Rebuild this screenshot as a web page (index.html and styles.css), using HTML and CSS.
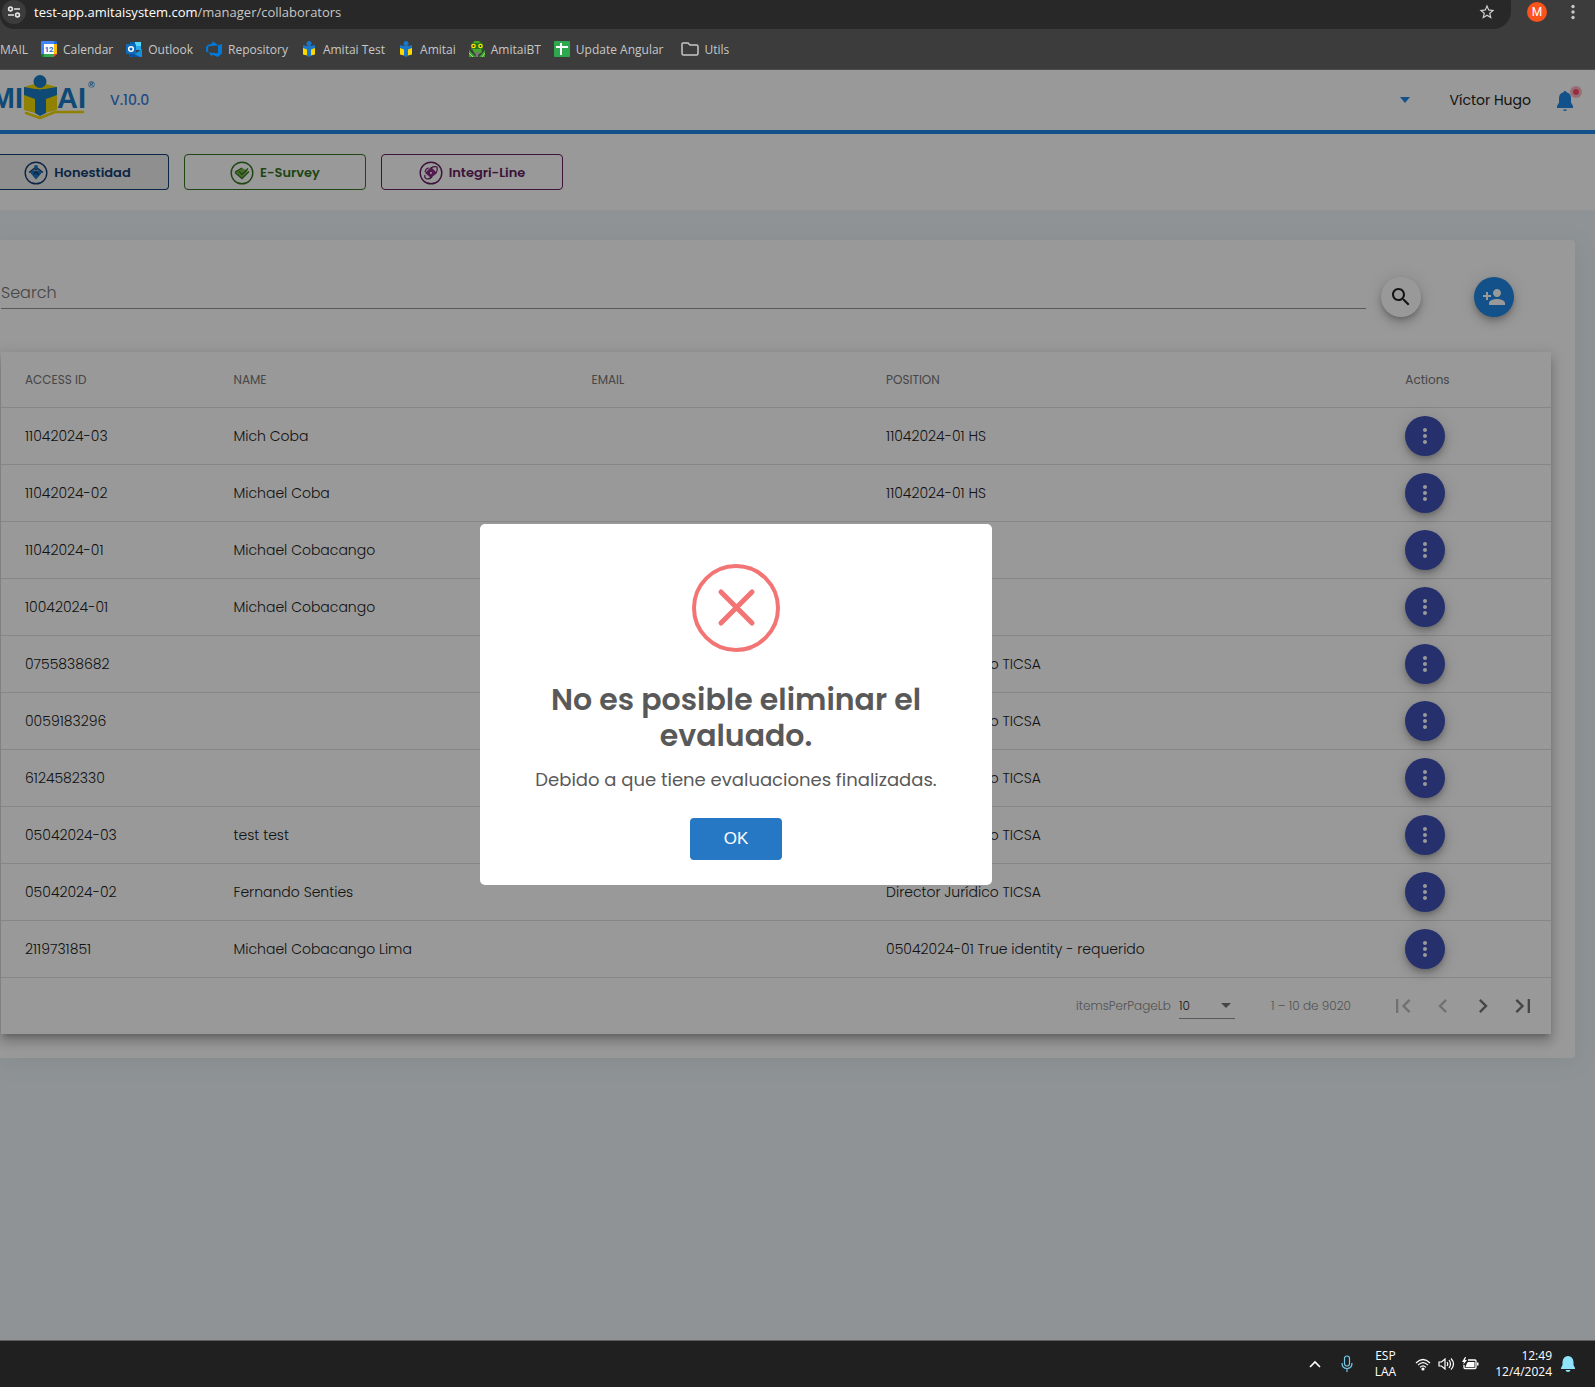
FILE: index.html
```html
<!DOCTYPE html>
<html lang="es">
<head>
    <meta charset="UTF-8">
    <meta name="viewport" content="width=device-width, initial-scale=1.0">
    <title>Amitai - Collaborators</title>
    <link rel="stylesheet" href="styles.css">
</head>
<body>
    <!-- Shared icons -->
    <svg class="sprite" aria-hidden="true">
        <symbol id="dots" viewBox="0 0 24 24"><path d="M12 8c1.1 0 2-.9 2-2s-.9-2-2-2-2 .9-2 2 .9 2 2 2zm0 2c-1.1 0-2 .9-2 2s.9 2 2 2 2-.9 2-2-.9-2-2-2zm0 6c-1.1 0-2 .9-2 2s.9 2 2 2 2-.9 2-2-.9-2-2-2z"/></symbol>
        <symbol id="amitai" viewBox="0 0 16 16">
            <path fill="#fdd800" d="M2 5h12v8.500L8 15l-6-1.500z"/>
            <path fill="#1976c8" d="M2 4l4 1h4l4-1v3l-4 1.500V15l-2 1-2-1V8.500L2 7z"/>
            <circle fill="#1976c8" cx="8" cy="2.500" r="2.500"/>
        </symbol>
    </svg>

    <header class="browser">
        <div class="toolbar">
            <div class="address">
                <button class="site-info" type="button" aria-label="Site information">
                    <svg width="14" height="12" viewBox="0 0 14 12" fill="none" stroke="#e3e3e3" stroke-width="1.600"><circle cx="3.500" cy="3" r="1.900"/><path d="M7 3h6M1 9h6"/><circle cx="10.500" cy="9" r="1.900"/></svg>
                </button>
                <span class="url">test-app.amitaisystem.com<span class="path">/manager/collaborators</span></span>
                <button class="star" type="button" aria-label="Bookmark">
                    <svg width="18" height="18" viewBox="0 0 24 24" fill="#d0d0d0"><path d="M22 9.240l-7.190-.62L12 2 9.190 8.630 2 9.240l5.460 4.730L5.820 21 12 17.270 18.180 21l-1.630-7.030L22 9.240zM12 15.400l-3.760 2.270 1-4.280-3.320-2.880 4.380-.38L12 6.100l1.710 4.040 4.380.38-3.320 2.880 1 4.280L12 15.400z"/></svg>
                </button>
            </div>
            <button class="profile" type="button">M</button>
            <button class="menu" type="button" aria-label="Menu">
                <svg width="20" height="20" viewBox="0 0 20 20" fill="#c7c7c7"><circle cx="10" cy="4.500" r="1.700"/><circle cx="10" cy="10" r="1.700"/><circle cx="10" cy="15.500" r="1.700"/></svg>
            </button>
        </div>
        <nav class="bookmarks">
            <a href="#">MAIL</a>
            <a href="#">
                <svg width="16" height="16" viewBox="0 0 16 16"><path fill="#fff" d="M3 3h10v10H3z"/><path fill="#4285f4" d="M1 0h12v3H3v10H0V1z"/><path fill="#1a66d6" d="M13 0h2l1 1v2h-3z"/><path fill="#fbbc04" d="M13 3h3v10h-3z"/><path fill="#34a853" d="M3 13h10v3H3z"/><path fill="#188038" d="M0 13h3v3H1z"/><path fill="#ea4335" d="M13 13h3l-3 3z"/><text x="8" y="11" text-anchor="middle" class="day">12</text></svg>
                Calendar
            </a>
            <a href="#">
                <svg width="16" height="16" viewBox="0 0 16 16"><path fill="#50d9ff" d="M4 1h11v8H4z"/><path fill="#0a64ad" d="M4 1h5v4H4z"/><path fill="#28a8ea" d="M9 5h6v4H9z"/><path fill="#1490df" d="M3 8l7 4 6-4v8H4z"/><path fill="#0a4fa0" d="M4 11l10 5H5l-1-1z"/><rect fill="#0f6cbd" y="3" width="10" height="10" rx="1"/><circle cx="5" cy="8" r="2.300" fill="none" stroke="#fff" stroke-width="1.500"/></svg>
                Outlook
            </a>
            <a href="#">
                <svg width="16" height="16" viewBox="0 0 16 16"><path fill="#0078d7" d="M16 3v9.500L12 16l-6-2.300V16L2.500 11.500 12 12.300V4.200zM12.200 4.200L6.500 0v2.300L1.500 4 0 6v4.500l2.200 1V5.600z"/></svg>
                Repository
            </a>
            <a href="#"><svg width="16" height="16"><use href="#amitai"/></svg> Amitai Test</a>
            <a href="#"><svg width="16" height="16"><use href="#amitai"/></svg> Amitai</a>
            <a href="#">
                <svg width="16" height="16" viewBox="0 0 16 16"><path fill="#27731f" d="M2 3l3-3h6l3 3v6H2z"/><path fill="#49a52d" d="M5 0h5l1 2H5zM3 8h9l1 3-3 2H6z"/><circle fill="#ffe700" cx="4.500" cy="5" r="2.300"/><circle fill="#ffe700" cx="11.500" cy="5" r="2.300"/><circle fill="#223b12" cx="4.500" cy="5" r="1"/><circle fill="#223b12" cx="11.500" cy="5" r="1"/><path fill="#39a32f" d="M0 9l7 7H0zM16 9l-6 7h6z"/><path fill="#777" d="M6 11h4l-1 5H7z"/><path stroke="#a8d96a" d="M0 12l4 4M16 12l-3 4"/></svg>
                AmitaiBT
            </a>
            <a href="#">
                <svg width="16" height="16" viewBox="0 0 16 16"><rect fill="#2ea84f" width="16" height="16" rx="1"/><path fill="#fff" d="M2 5h4V2h2v3h6v2H8v7H6V7H2z"/></svg>
                Update Angular
            </a>
            <a class="folder" href="#">
                <svg width="18" height="14" viewBox="0 0 18 14" fill="none" stroke="#c7c7c7" stroke-width="1.500"><path d="M2 1h5l2 2h6.500q1.500 0 1.500 1.500v7q0 1.500-1.500 1.500h-13Q1 13 1 11.500V2q0-1 1-1z"/></svg>
                Utils
            </a>
        </nav>
    </header>

    <div class="page">
        <header class="topbar">
            <svg class="logo" width="98" height="60" viewBox="0 0 98 60" role="img" aria-label="Amitai">
                <path fill="#f0d800" d="M24 17l10-3h12l11 3v23l-12 3-5 2-5-2-11-3z"/>
                <path fill="none" stroke="#f0d800" stroke-width="2.500" stroke-linecap="round" stroke-linejoin="round" d="M26 43l14 5 15-6h28"/>
                <path fill="#1a7bc4" d="M24 17l11 2h10l12-2v8l-11 4v14l-6 3-5-3V29l-11-4z"/>
                <circle fill="#1a7bc4" cx="40" cy="11.500" r="6.500"/>
                <path fill="none" stroke="#f0d800" stroke-width="1.200" d="M33 17q7 4 14 0"/>
                <text class="logo-text" x="23" y="38" text-anchor="end">MI</text>
                <text class="logo-text" x="57" y="38">AI</text>
                <text class="logo-mark" x="88" y="18">®</text>
            </svg>
            <span class="version">V.10.0</span>
            <button class="caret" type="button" aria-label="Company">
                <svg width="10" height="6" viewBox="0 0 10 6" fill="#1e88e5"><path d="M0 0h10L5 6z"/></svg>
            </button>
            <span class="user">Víctor Hugo</span>
            <button class="alerts" type="button" aria-label="Notifications">
                <svg width="30" height="30" viewBox="0 0 30 30"><path fill="#1e88e5" d="M10 24.500h4q-.5 1.500-2 1.500t-2-1.500zM18 17.500V13q0-4.500-4.600-5.800Q13.400 6 12 6t-1.400 1.200Q6 8.500 6 13v4.500L4 21v2h16v-2z"/><circle fill="#fc4b6c" fill-opacity=".4" cx="23" cy="7" r="6"/><circle fill="#fc4b6c" cx="23" cy="7" r="3"/></svg>
            </button>
        </header>

        <nav class="modules">
            <button class="module honesty" type="button">
                <svg width="24" height="24" viewBox="0 0 24 24"><circle cx="12" cy="12" r="10.800" fill="none" stroke="currentColor" stroke-width="1.400"/><circle cx="12" cy="6" r="2" fill="#1b75bc"/><path fill="#1b75bc" d="M6 11.500l3-2.500 3 1 3-1 3 2.500-6 7z"/><path fill="none" stroke="currentColor" stroke-width="1.300" d="M5 11.500l5-4 2 1.500 2-1.500 5 4M10 13l2-2 3 3"/></svg>
                Honestidad
            </button>
            <button class="module survey" type="button">
                <svg width="24" height="24" viewBox="0 0 24 24"><circle cx="12" cy="12" r="10.800" fill="none" stroke="currentColor" stroke-width="1.400"/><path fill="#7ab648" d="M5 11l7-4 6 3-6 7z"/><path fill="none" stroke="currentColor" stroke-width="1.400" d="M5 11.500l7 6 7-7M9 10.500l3 3 6-6M5 11l7-4"/></svg>
                E-Survey
            </button>
            <button class="module integri" type="button">
                <svg width="24" height="24" viewBox="0 0 24 24"><circle cx="12" cy="12" r="10.800" fill="none" stroke="currentColor" stroke-width="1.400"/><path fill="#8a2b85" d="M12 6l6 6-6 5-6-5z"/><path fill="none" stroke="currentColor" stroke-width="1.200" d="M6 14q-1 3 2 4 3 0 5-2M12 7q3-2 6-1 1 3-1 6M6 11q1-4 4-4"/><circle cx="12" cy="12" r="1" fill="#fff"/></svg>
                Integri-Line
            </button>
        </nav>

        <main class="card">
            <form class="search">
                <input class="search-input" type="text" placeholder="Search" aria-label="Search">
                <button class="fab light" type="button" aria-label="Search">
                    <svg width="24" height="24" viewBox="0 0 24 24"><path d="M15.500 14h-.79l-.28-.27C15.410 12.590 16 11.110 16 9.500 16 5.910 13.090 3 9.500 3S3 5.910 3 9.500 5.910 16 9.500 16c1.610 0 3.090-.59 4.230-1.570l.27.28v.79l5 4.990L20.490 19l-4.990-5zm-6 0C7.010 14 5 11.990 5 9.500S7.010 5 9.500 5 14 7.010 14 9.500 11.990 14 9.500 14z"/></svg>
                </button>
                <button class="fab blue" type="button" aria-label="Add collaborator">
                    <svg width="24" height="24" viewBox="0 0 24 24"><path d="M15 12c2.210 0 4-1.790 4-4s-1.790-4-4-4-4 1.790-4 4 1.790 4 4 4zm-9-2V7H4v3H1v2h3v3h2v-3h3v-2H6zm9 4c-2.670 0-8 1.340-8 4v2h16v-2c0-2.660-5.330-4-8-4z"/></svg>
                </button>
            </form>

            <div class="table-box">
                <table>
                    <thead>
                        <tr>
                            <th class="col-id">ACCESS ID</th>
                            <th class="col-name">NAME</th>
                            <th class="col-email">EMAIL</th>
                            <th class="col-position">POSITION</th>
                            <th>Actions</th>
                        </tr>
                    </thead>
                    <tbody>
                        <tr><td>11042024-03</td><td>Mich Coba</td><td></td><td>11042024-01 HS</td><td><button class="fab indigo" type="button" aria-label="Actions"><svg width="24" height="24"><use href="#dots"/></svg></button></td></tr>
                        <tr><td>11042024-02</td><td>Michael Coba</td><td></td><td>11042024-01 HS</td><td><button class="fab indigo" type="button" aria-label="Actions"><svg width="24" height="24"><use href="#dots"/></svg></button></td></tr>
                        <tr><td>11042024-01</td><td>Michael Cobacango</td><td></td><td></td><td><button class="fab indigo" type="button" aria-label="Actions"><svg width="24" height="24"><use href="#dots"/></svg></button></td></tr>
                        <tr><td>10042024-01</td><td>Michael Cobacango</td><td></td><td></td><td><button class="fab indigo" type="button" aria-label="Actions"><svg width="24" height="24"><use href="#dots"/></svg></button></td></tr>
                        <tr><td>0755838682</td><td></td><td></td><td>Director Jurídico TICSA</td><td><button class="fab indigo" type="button" aria-label="Actions"><svg width="24" height="24"><use href="#dots"/></svg></button></td></tr>
                        <tr><td>0059183296</td><td></td><td></td><td>Director Jurídico TICSA</td><td><button class="fab indigo" type="button" aria-label="Actions"><svg width="24" height="24"><use href="#dots"/></svg></button></td></tr>
                        <tr><td>6124582330</td><td></td><td></td><td>Director Jurídico TICSA</td><td><button class="fab indigo" type="button" aria-label="Actions"><svg width="24" height="24"><use href="#dots"/></svg></button></td></tr>
                        <tr><td>05042024-03</td><td>test test</td><td></td><td>Director Jurídico TICSA</td><td><button class="fab indigo" type="button" aria-label="Actions"><svg width="24" height="24"><use href="#dots"/></svg></button></td></tr>
                        <tr><td>05042024-02</td><td>Fernando Senties</td><td></td><td>Director Jurídico TICSA</td><td><button class="fab indigo" type="button" aria-label="Actions"><svg width="24" height="24"><use href="#dots"/></svg></button></td></tr>
                        <tr><td>2119731851</td><td>Michael Cobacango Lima</td><td></td><td>05042024-01 True identity - requerido</td><td><button class="fab indigo" type="button" aria-label="Actions"><svg width="24" height="24"><use href="#dots"/></svg></button></td></tr>
                    </tbody>
                </table>
                <div class="paginator">
                    <label for="page-size">itemsPerPageLb</label>
                    <div class="page-size">
                        <select id="page-size">
                            <option>10</option>
                            <option>25</option>
                            <option>50</option>
                        </select>
                        <svg width="10" height="5" viewBox="0 0 10 5" fill="#757575"><path d="M0 0h10L5 5z"/></svg>
                    </div>
                    <span class="range">1 – 10 de 9020</span>
                    <button class="page-btn" type="button" disabled aria-label="First page"><svg width="28" height="28" viewBox="0 0 24 24"><path d="M18.410 16.590L13.820 12l4.590-4.590L17 6l-6 6 6 6zM6 6h2v12H6z"/></svg></button>
                    <button class="page-btn" type="button" disabled aria-label="Previous page"><svg width="28" height="28" viewBox="0 0 24 24"><path d="M15.410 7.410L14 6l-6 6 6 6 1.410-1.410L10.830 12z"/></svg></button>
                    <button class="page-btn" type="button" aria-label="Next page"><svg width="28" height="28" viewBox="0 0 24 24"><path d="M10 6L8.590 7.410 13.170 12l-4.580 4.590L10 18l6-6z"/></svg></button>
                    <button class="page-btn" type="button" aria-label="Last page"><svg width="28" height="28" viewBox="0 0 24 24"><path d="M5.590 7.410L10.180 12l-4.590 4.590L7 18l6-6-6-6zM16 6h2v12h-2z"/></svg></button>
                </div>
            </div>
        </main>

        <div class="overlay">
            <div class="modal" role="alertdialog" aria-labelledby="modal-title" aria-describedby="modal-text">
                <svg class="modal-icon" width="88" height="88" viewBox="0 0 88 88" fill="none" stroke="#f27474"><circle cx="44" cy="44" r="42" stroke-width="4"/><path stroke-width="5" stroke-linecap="round" d="M29 28l31 31M60 28L29 59"/></svg>
                <h2 id="modal-title">No es posible eliminar el evaluado.</h2>
                <p id="modal-text">Debido a que tiene evaluaciones finalizadas.</p>
                <button class="ok" type="button">OK</button>
            </div>
        </div>
    </div>

    <footer class="taskbar">
        <svg width="12" height="8" viewBox="0 0 12 8" fill="none" stroke="#fff" stroke-width="1.600"><path d="M1 7l5-5 5 5"/></svg>
        <svg class="mic" width="12" height="18" viewBox="0 0 12 18" fill="none" stroke="#76c8e8" stroke-width="1.200"><rect x="3.500" y="1" width="5" height="10" rx="2.500"/><path d="M1 8q0 5.500 5 5.500T11 8M6 13.500V17"/></svg>
        <div class="lang">ESP<br>LAA</div>
        <div class="status">
            <svg width="16" height="16" viewBox="0 0 16 16" fill="none" stroke="#fff" stroke-width="1.200"><path d="M1 7q7-7 14 0M3 9.200q5-5 10 0M5 11.400q3-3 6 0"/><circle cx="8" cy="13" r="1" fill="#fff"/></svg>
            <svg width="17" height="16" viewBox="0 0 17 16" fill="none" stroke="#fff" stroke-width="1.200"><path d="M1 6v4h2.500L7 13V3L3.500 6zM9 6q1.500 2 0 4M11 4q3 4 0 8M13 2.500q5 5.500 0 11"/></svg>
            <svg width="17" height="16" viewBox="0 0 17 16"><path fill="none" stroke="#fff" stroke-width="1.300" d="M6 4h7q1 0 1 1v6.500q0 1-1 1H3q-1 0-1-1V9"/><path fill="#fff" d="M5 7l1-1h6.500v5h-9zM15 6.500h1.500v3H15zM3 1L0 6h2L1 9l4-5H3l1-3z"/></svg>
        </div>
        <div class="clock">12:49<br>12/4/2024</div>
        <svg width="16" height="16" viewBox="0 0 16 16" fill="#8fe3fb"><path d="M1 12l1.500-3V6q.5-5.500 5.500-6 5 .5 5.500 6v3l1.500 3v1H1zM5.500 14h5Q10 16 8 16t-2.500-2z"/></svg>
    </footer>
</body>
</html>
```

FILE: styles.css
```css
* {
    box-sizing: border-box;
}
body {
    margin: 0;
    min-height: 100vh;
    display: flex;
    flex-direction: column;
    font-family: Poppins, Inter, sans-serif;
    font-size: 14px;
    font-weight: 300;
    color: #212121;
    overflow-x: hidden;
}
button {
    display: flex;
    align-items: center;
    justify-content: center;
    padding: 0;
    border: none;
    background: none;
    font: inherit;
    color: inherit;
    cursor: pointer;
}
.sprite {
    display: none;
}

/* Browser bar */
.browser {
    height: 70px;
    background: #3c3c3c;
    border-bottom: 1px solid #4d4d4d;
    font-family: "Segoe UI", "Open Sans", sans-serif;
    font-weight: 400;
    color: #c7c7c7;
}
.toolbar {
    display: flex;
    align-items: flex-start;
    padding-right: 12px;
}
.address {
    flex: 1;
    display: flex;
    align-items: center;
    height: 29px;
    padding: 0 15px 5px 2px;
    background: #282828;
    border-radius: 0 0 18px 14px;
}
.site-info {
    width: 24px;
    height: 24px;
    border-radius: 50%;
    background: #3c3c3c;
}
.url {
    flex: 1;
    margin-left: 8px;
    font-size: 13px;
    color: #fff;
}
.path {
    color: #c7c7c7;
}
.profile {
    width: 20px;
    height: 20px;
    margin: 2px 16px 0;
    border-radius: 50%;
    background: #fa541c;
    color: #fff;
    font-family: Roboto, sans-serif;
    font-size: 12px;
}
.menu {
    margin-top: 2px;
}
.bookmarks {
    display: flex;
    align-items: center;
    gap: 13px;
    height: 40px;
    font-size: 12px;
}
.bookmarks a {
    display: flex;
    align-items: center;
    gap: 6px;
    color: inherit;
    text-decoration: none;
    white-space: nowrap;
}
.bookmarks .folder {
    margin-left: 4px;
}
.day {
    font: bold 8px Roboto, sans-serif;
    fill: #1a66d6;
}

/* Page */
.page {
    position: relative;
    flex: 1;
    background: #eef5f9;
}
.topbar {
    display: flex;
    align-items: center;
    height: 64px;
    padding-right: 12px;
    background: #fff;
    border-bottom: 4px solid #1e88e5;
}
.logo-text {
    font: bold 29px "Liberation Sans", Arial, sans-serif;
    fill: #1a7bc4;
}
.logo-mark {
    font: bold 9px "Liberation Sans", Arial, sans-serif;
    fill: #1a7bc4;
}
.version {
    flex: 1;
    margin-left: 12px;
    font-weight: 500;
    color: #3a7fe0;
}
.user {
    margin: 0 22px 0 40px;
    font-weight: 400;
}
.modules {
    display: flex;
    gap: 15px;
    padding: 20px 0;
    background: #fff;
}
.module {
    gap: 6px;
    width: 182px;
    height: 36px;
    padding-top: 2px;
    border: 1px solid;
    border-radius: 4px;
    font-size: 13px;
    font-weight: 600;
}
.honesty {
    width: 169px;
    padding-right: 13px;
    border-left: none;
    border-radius: 0 4px 4px 0;
    background: #efefef;
    color: #143f72;
}
.survey {
    color: #34761f;
}
.integri {
    color: #661f63;
}

.card {
    margin: 30px 20px 0 0;
    padding: 37px 24px 24px 1px;
    background: #fff;
    border-radius: 0 4px 4px 0;
    box-shadow: 0 4px 24px rgba(90, 110, 130, 0.1);
}
.search {
    display: flex;
    align-items: flex-start;
    padding-right: 37px;
}
.search-input {
    flex: 1;
    height: 32px;
    margin-right: 15px;
    padding: 0;
    border: none;
    border-bottom: 1px solid #949494;
    background: none;
    font: inherit;
    font-size: 16px;
}
.search-input::placeholder {
    color: #757575;
}
.fab {
    width: 40px;
    height: 40px;
    border-radius: 50%;
    box-shadow: 0 3px 5px -1px rgba(0, 0, 0, 0.2), 0 6px 10px rgba(0, 0, 0, 0.14), 0 1px 18px rgba(0, 0, 0, 0.12);
}
.light {
    background: #fff;
    fill: #212121;
}
.blue {
    margin-left: 53px;
    background: #1e88e5;
    fill: #fff;
}
.indigo {
    background: #3f51b5;
    fill: #fff;
}

.table-box {
    margin-top: 35px;
    background: #fff;
    box-shadow: 0 5px 5px -3px rgba(0, 0, 0, 0.2), 0 8px 10px 1px rgba(0, 0, 0, 0.14), 0 3px 14px 2px rgba(0, 0, 0, 0.12);
}
table {
    width: 100%;
    border-collapse: separate;
    border-spacing: 0;
    table-layout: fixed;
}
th, td {
    padding: 0;
    border-bottom: 1px solid #e0e0e0;
    text-align: left;
    white-space: nowrap;
}
th {
    height: 56px;
    font-size: 12px;
    font-weight: 400;
    color: #757575;
}
td {
    height: 57px;
}
th:first-child, td:first-child {
    padding-left: 24px;
}
.col-id {
    width: 15%;
}
.col-name {
    width: 23.1%;
}
.col-email {
    width: 19%;
}
.col-position {
    width: 33.5%;
}
.paginator {
    display: flex;
    align-items: center;
    justify-content: flex-end;
    height: 56px;
    padding-right: 8px;
    font-size: 12px;
    color: #8a8a8a;
}
.page-size {
    display: flex;
    align-items: center;
    width: 56px;
    margin: 0 36px 0 8px;
    border-bottom: 1px solid #949494;
}
.page-size select {
    flex: 1;
    height: 24px;
    padding: 0;
    border: none;
    background: none;
    appearance: none;
    font: inherit;
    color: #212121;
}
.page-size svg {
    margin-right: 4px;
}
.range {
    margin-right: 32px;
}
.page-btn {
    width: 40px;
    height: 40px;
    fill: #757575;
}
.page-btn:disabled {
    fill: #bdbdbd;
}

/* Alert */
.overlay {
    position: absolute;
    inset: 0;
    display: flex;
    align-items: center;
    justify-content: center;
    padding: 0 123px 2px 0;
    background: rgba(0, 0, 0, 0.4);
}
.modal {
    display: flex;
    flex-direction: column;
    align-items: center;
    width: 512px;
    padding: 40px 20px 25px;
    background: #fff;
    border-radius: 5px;
    color: #595959;
    text-align: center;
}
.modal h2 {
    max-width: 400px;
    margin: 30px 0 12px;
    font-size: 30px;
    font-weight: 600;
    line-height: 36px;
}
.modal p {
    margin: 0 0 24px;
    font-size: 18px;
    font-weight: 400;
    line-height: 28px;
}
.ok {
    width: 92px;
    height: 42px;
    border-radius: 4px;
    background: #2778c4;
    color: #fff;
    font: 17px "Liberation Sans", Arial, sans-serif;
}

/* Taskbar */
.taskbar {
    display: flex;
    align-items: center;
    justify-content: flex-end;
    height: 47px;
    padding-right: 19px;
    background: #202020;
    border-top: 1px solid #5c5c5c;
    font-family: "Segoe UI", "Open Sans", sans-serif;
    font-size: 12px;
    font-weight: 400;
    line-height: 16px;
    color: #fff;
}
.mic {
    margin-left: 20px;
}
.lang {
    margin: 0 19px 0 22px;
    text-align: center;
}
.status {
    display: flex;
    gap: 7px;
}
.clock {
    margin: 0 8px 0 16px;
    text-align: right;
}
```
